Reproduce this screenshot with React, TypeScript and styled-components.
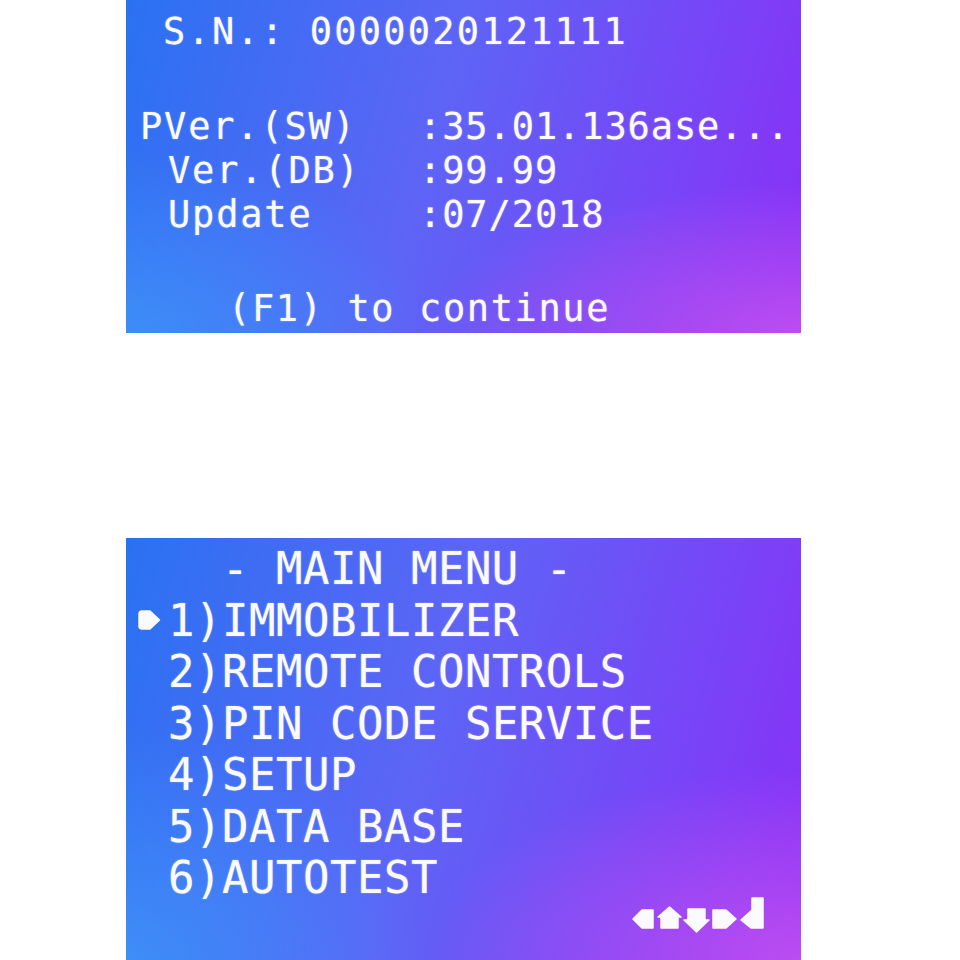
import { Fragment } from "react";
import styled, { createGlobalStyle } from "styled-components";

const GlobalStyle = createGlobalStyle`
  body {
    margin: 0;
    background: #ffffff;
  }
`;

const Page = styled.main`
  display: flex;
  flex-direction: column;
  gap: 205px;
  padding-left: 126px;
  height: 960px;
  overflow: hidden;
`;

const Screen = styled.section<{ $height: number }>`
  width: 675px;
  height: ${(p) => p.$height}px;
  flex-shrink: 0;
  box-sizing: border-box;
  overflow: hidden;
  color: #fbfbff;
  font-family: "DejaVu Sans Mono", "Liberation Mono", monospace;
  white-space: pre;
  text-shadow: 0 0 1.5px rgba(255, 255, 255, 0.55);
  background:
    radial-gradient(ellipse 55% 45% at 100% 100%, rgba(196, 82, 240, 0.85), rgba(196, 82, 240, 0) 100%),
    radial-gradient(ellipse 45% 55% at 0% 100%, rgba(62, 152, 250, 0.75), rgba(62, 152, 250, 0) 100%),
    linear-gradient(105deg, #2a72f2 0%, #5d64f6 45%, #8a2ff7 100%);
`;

const InfoScreen = styled(Screen)`
  padding: 10px 0 0 14px;
  font-size: 37px;
  line-height: 44px;
`;

const SerialLine = styled.div`
  padding-left: 23px;
  letter-spacing: 2.2px;
`;

const InfoGrid = styled.div`
  display: grid;
  grid-template-columns: 279px auto;
  margin-top: 51px;
  letter-spacing: 1.8px;
`;

const Label = styled.span<{ $indent?: number }>`
  padding-left: ${(p) => p.$indent ?? 0}px;
`;

const Value = styled.span`
  letter-spacing: 0.9px;
`;

const ContinueHint = styled.div`
  margin-top: 50px;
  padding-left: 88px;
  letter-spacing: 1.6px;
`;

const MenuScreen = styled(Screen)`
  padding: 5px 0 0 15px;
  font-size: 44px;
  line-height: 51.5px;
  letter-spacing: 0.5px;
`;

const MenuTitle = styled.div``;

const MenuRow = styled.div`
  display: flex;
  align-items: center;
`;

const Marker = styled.span`
  display: flex;
  align-items: center;
  width: 27px;
  height: 51.5px;
  margin-left: -3px;
  margin-right: 3px;
`;

const Footer = styled.div`
  display: flex;
  justify-content: flex-end;
  padding-right: 36px;
  margin-top: -9px;
`;

const info = [
  { label: "PVer.(SW)", value: ":35.01.136ase...", indent: 0 },
  { label: "Ver.(DB)", value: ":99.99", indent: 28 },
  { label: "Update", value: ":07/2018", indent: 28 },
];

const menu = [
  "IMMOBILIZER",
  "REMOTE CONTROLS",
  "PIN CODE SERVICE",
  "SETUP",
  "DATA BASE",
  "AUTOTEST",
];

const SelectArrow = () => (
  <svg width="23" height="22" viewBox="0 0 23 22">
    <path
      d="M1 5 Q1 2 4 2 L12 2 L21.5 11 L12 20 L4 20 Q1 20 1 17 Z"
      fill="#fbfbff"
      stroke="#fbfbff"
      strokeWidth="1.5"
      strokeLinejoin="round"
    />
  </svg>
);

const NavKeys = () => (
  <svg
    width="135"
    height="40"
    viewBox="0 0 135 40"
    fill="#fbfbff"
    stroke="#fbfbff"
    strokeWidth="1.5"
    strokeLinejoin="round"
  >
    {/* left */}
    <path d="M3 24 L12 15 L23 15 L23 33 L12 33 Z" />
    {/* up */}
    <path d="M39.5 12 L51 22 L48 22 L48 33 L31 33 L31 22 L28 22 Z" />
    {/* down */}
    <path d="M58 14 L75 14 L75 25 L79 25 L66.5 37 L54 25 L58 25 Z" />
    {/* right */}
    <path d="M83 15 L96 15 L106 24 L96 33 L83 33 Z" />
    {/* enter */}
    <path d="M122 3 L133 3 L133 33 L121 33 L111 25 L122 15 Z" />
  </svg>
);

export default function App() {
  return (
    <>
      <GlobalStyle />
      <Page>
        <InfoScreen $height={333}>
          <SerialLine>S.N.: 0000020121111</SerialLine>
          <InfoGrid>
            {info.map((row) => (
              <Fragment key={row.label}>
                <Label $indent={row.indent}>{row.label}</Label>
                <Value>{row.value}</Value>
              </Fragment>
            ))}
          </InfoGrid>
          <ContinueHint>(F1) to continue</ContinueHint>
        </InfoScreen>

        <MenuScreen $height={422}>
          <MenuTitle>{"   - MAIN MENU -"}</MenuTitle>
          {menu.map((item, i) => (
            <MenuRow key={item}>
              <Marker>{i === 0 && <SelectArrow />}</Marker>
              {`${i + 1})${item}`}
            </MenuRow>
          ))}
          <Footer>
            <NavKeys />
          </Footer>
        </MenuScreen>
      </Page>
    </>
  );
}
